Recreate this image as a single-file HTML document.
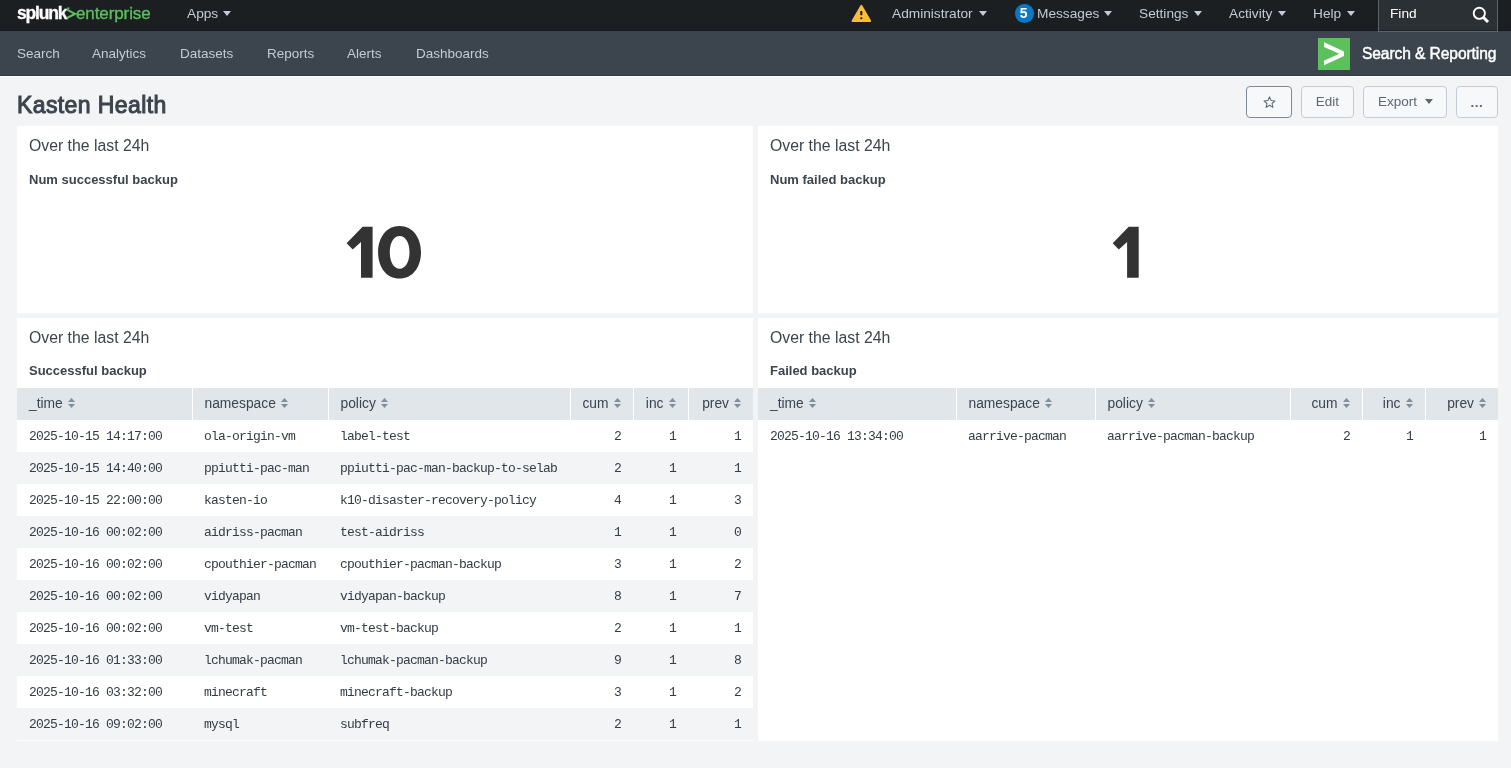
<!DOCTYPE html>
<html><head><meta charset="utf-8"><style>
*{box-sizing:border-box;margin:0;padding:0}
html,body{width:1511px;height:768px;overflow:hidden;background:#f2f4f5;font-family:"Liberation Sans",sans-serif;color:#3c444d}
.abs{position:absolute}
#wrap{position:absolute;left:0;top:0;width:1511px;height:768px;will-change:transform}
#top{position:absolute;z-index:2;left:0;top:0;width:1511px;height:31px;background:#1b1f22;border-bottom:1px solid #171b1e}
#appbar{position:absolute;left:0;top:31px;width:1511px;height:45px;background:#3c444d;border-bottom:1px solid #343b43}
#appbar:after{content:"";position:absolute;left:0;right:0;bottom:-2px;height:1px;background:#fff}
.nav{position:absolute;top:0;height:31px;line-height:27px;font-size:13.7px;color:#c3cbd4;white-space:nowrap}
.caret{position:absolute;width:0;height:0;border-left:4px solid transparent;border-right:4px solid transparent;border-top:5px solid #c3cbd4}
.app{position:absolute;top:15px;font-size:13.5px;line-height:16px;color:#c3cbd4;white-space:nowrap}
#title{position:absolute;left:17px;top:91px;font-size:23px;line-height:28px;letter-spacing:0.4px;-webkit-text-stroke:1px #3c444d;color:#3c444d;white-space:nowrap}
.btn{position:absolute;top:86px;height:32px;border:1px solid #c3cbd4;border-radius:4px;background:#f7f8fa;font-size:13.5px;line-height:30px;color:#5c6773;white-space:nowrap}
.panel{position:absolute;background:#fff}
.ptitle{position:absolute;left:12px;font-size:15.8px;line-height:20px;color:#3c444d;white-space:nowrap}
.psub{position:absolute;left:12px;font-size:13px;line-height:16px;font-weight:bold;color:#3c444d;white-space:nowrap}
table{position:absolute;left:0;border-collapse:collapse;table-layout:fixed}
th{height:32px;background:#e1e6eb;font-weight:normal;font-size:13.8px;line-height:30px;padding:1px 0 1px 12px;text-align:left;border-left:1px solid #fff;color:#3c444d;white-space:nowrap;vertical-align:top}
th:first-child{border-left:0}
th.r{text-align:right;padding:1px 12px 1px 0}
td{height:32px;font-family:"Liberation Mono",monospace;font-size:13px;letter-spacing:-0.8px;line-height:30px;padding:2px 0 0 12px;color:#353c44;white-space:nowrap;overflow:hidden;vertical-align:top}
td.r{text-align:right;padding:2px 12px 0 0}
tr:nth-child(odd) td{background:#f2f4f5}
.sort{display:inline-block;vertical-align:baseline;margin-left:5px;position:relative;top:0px}
</style></head><body><div id="wrap">
<div id="top"><div class="nav" style="left:17px;top:0;font-size:17.5px;line-height:27px;font-weight:bold;color:#fff;letter-spacing:-1.2px;-webkit-text-stroke:0.3px #fff">splunk</div><svg class="abs" style="left:66px;top:7px" width="11" height="14" viewBox="0 0 11 14"><path d="M1 2.6L9 6.8L1 11" fill="none" stroke="#5cc05c" stroke-width="2"/><circle cx="2.4" cy="1.3" r="1.1" fill="#5cc05c"/></svg><div class="nav" style="left:76px;top:0;font-size:17px;line-height:27px;color:#5cc05c;letter-spacing:-0.1px;-webkit-text-stroke:0.35px #5cc05c">enterprise</div><div class="nav" style="left:187px">Apps</div><div class="caret" style="left:223px;top:11px"></div><svg class="abs" style="left:851px;top:4px" width="21" height="19" viewBox="0 0 21 19"><path d="M10.35 1.2Q10.35 0.8 10.35 0.8Q10.9 0.8 11.3 1.5L20 16.6Q20.6 18 19.2 18H1.5Q0.1 18 0.7 16.6L9.4 1.5Q9.8 0.8 10.35 0.8Z" fill="#f8be34"/><rect x="9.25" y="7" width="2.1" height="4.2" rx="0.6" fill="#1a1e22"/><rect x="9.2" y="13.2" width="2.2" height="2" rx="0.9" fill="#1a1e22"/></svg><div class="nav" style="left:892px">Administrator</div><div class="caret" style="left:979px;top:11px"></div><div class="abs" style="left:1015px;top:4px;width:18.5px;height:19px;border-radius:50%;background:#0a78c4;color:#fff;font-size:14px;line-height:18px;font-weight:bold;text-align:center;text-indent:-1px">5</div><div class="nav" style="left:1037px">Messages</div><div class="caret" style="left:1104px;top:11px"></div><div class="nav" style="left:1139px">Settings</div><div class="caret" style="left:1194px;top:11px"></div><div class="nav" style="left:1229px">Activity</div><div class="caret" style="left:1278px;top:11px"></div><div class="nav" style="left:1313px">Help</div><div class="caret" style="left:1347px;top:11px"></div><div class="abs" style="left:1378px;top:0;width:120px;height:32px;background:#2b3034;border:1px solid #5a646f;border-top:0;box-shadow:inset 0 -1px 0 #202427"></div><div class="nav" style="left:1390px;color:#fff">Find</div><svg class="abs" style="left:1472px;top:6px" width="18" height="18" viewBox="0 0 18 18"><circle cx="7.3" cy="7.3" r="5.6" fill="none" stroke="#fff" stroke-width="1.9"/><path d="M11 11L16 16" stroke="#fff" stroke-width="3"/></svg></div><div id="appbar"><div class="app" style="left:17px">Search</div><div class="app" style="left:92px">Analytics</div><div class="app" style="left:180px">Datasets</div><div class="app" style="left:267px">Reports</div><div class="app" style="left:347px">Alerts</div><div class="app" style="left:416px">Dashboards</div><svg class="abs" style="left:1318px;top:7px" width="32" height="32" viewBox="0 0 32 32"><rect width="32" height="32" fill="#5cc05c"/><path d="M6 4.3L26 13.5V18.1L6 27.3V22.7L21.2 15.8L6 8.9Z" fill="#fff"/></svg><div class="app" style="left:1362px;top:14px;font-size:15.6px;line-height:18px;letter-spacing:-0.1px;-webkit-text-stroke:0.45px #fff;color:#fff">Search &amp; Reporting</div></div><div id="title">Kasten Health</div><div class="btn" style="left:1246px;width:46px;border-color:#7d8995"><svg class="abs" style="left:16px;top:9px" width="13" height="13" viewBox="0 0 13 13"><path d="M6.5 0.9L8.1 4.6L12 4.9L9 7.5L9.9 11.4L6.5 9.3L3.1 11.4L4 7.5L1 4.9L4.9 4.6Z" fill="none" stroke="#5c6773" stroke-width="1.05" stroke-linejoin="round"/></svg></div><div class="btn" style="left:1301px;width:53px;text-align:center">Edit</div><div class="btn" style="left:1363px;width:84px;padding-left:14px">Export<div class="caret" style="left:61px;top:12px;border-top-color:#5c6773"></div></div><div class="btn" style="left:1456px;width:42px;text-align:center;font-weight:bold;letter-spacing:0.5px;line-height:32px">...</div><div class="panel" style="left:17px;top:126px;width:736px;height:187px"><div class="ptitle" style="top:10px">Over the last 24h</div><div class="psub" style="top:46px">Num successful backup</div></div><div class="panel" style="left:758px;top:126px;width:740px;height:187px"><div class="ptitle" style="top:10px">Over the last 24h</div><div class="psub" style="top:46px">Num failed backup</div></div><svg class="abs" style="left:0;top:0" width="1511" height="768" viewBox="0 0 1511 768" fill="#333"><path d="M362.6 226.8H372.6V277.7H361.0V242.1L352.7 249.6L346.6 243.3Z"/><path d="M1128.7 226.8H1138.7V277.7H1127.1V242.1L1118.8 249.6L1112.7 243.3Z"/><path fill-rule="evenodd" d="M399.5 226C413 226 421 238 421 252.3C421 266.6 413 278.6 399.5 278.6C386 278.6 378.1 266.6 378.1 252.3C378.1 238 386 226 399.5 226Z M399.6 236C393.5 236 389.8 243 389.8 252.3C389.8 261.6 393.5 268.7 399.6 268.7C405.7 268.7 409.5 261.6 409.5 252.3C409.5 243 405.7 236 399.6 236Z"/></svg><div class="panel" style="left:17px;top:318px;width:736px;height:423px"><div class="ptitle" style="top:10px">Over the last 24h</div><div class="psub" style="top:45px">Successful backup</div><table style="top:70px;width:736px"><colgroup><col style="width:175px"><col style="width:136px"><col style="width:242px"><col style="width:63px"><col style="width:55px"><col style="width:65px"></colgroup><tr><th>_time<svg class="sort" width="7" height="10" viewBox="0 0 7 10"><path d="M3.5 0L7 4H0Z M3.5 10L7 6H0Z" fill="#818d99"/></svg></th><th>namespace<svg class="sort" width="7" height="10" viewBox="0 0 7 10"><path d="M3.5 0L7 4H0Z M3.5 10L7 6H0Z" fill="#818d99"/></svg></th><th>policy<svg class="sort" width="7" height="10" viewBox="0 0 7 10"><path d="M3.5 0L7 4H0Z M3.5 10L7 6H0Z" fill="#818d99"/></svg></th><th class="r">cum<svg class="sort" width="7" height="10" viewBox="0 0 7 10"><path d="M3.5 0L7 4H0Z M3.5 10L7 6H0Z" fill="#818d99"/></svg></th><th class="r">inc<svg class="sort" width="7" height="10" viewBox="0 0 7 10"><path d="M3.5 0L7 4H0Z M3.5 10L7 6H0Z" fill="#818d99"/></svg></th><th class="r">prev<svg class="sort" width="7" height="10" viewBox="0 0 7 10"><path d="M3.5 0L7 4H0Z M3.5 10L7 6H0Z" fill="#818d99"/></svg></th></tr><tr><td>2025-10-15 14:17:00</td><td>ola-origin-vm</td><td>label-test</td><td class="r">2</td><td class="r">1</td><td class="r">1</td></tr><tr><td>2025-10-15 14:40:00</td><td>ppiutti-pac-man</td><td>ppiutti-pac-man-backup-to-selab</td><td class="r">2</td><td class="r">1</td><td class="r">1</td></tr><tr><td>2025-10-15 22:00:00</td><td>kasten-io</td><td>k10-disaster-recovery-policy</td><td class="r">4</td><td class="r">1</td><td class="r">3</td></tr><tr><td>2025-10-16 00:02:00</td><td>aidriss-pacman</td><td>test-aidriss</td><td class="r">1</td><td class="r">1</td><td class="r">0</td></tr><tr><td>2025-10-16 00:02:00</td><td>cpouthier-pacman</td><td>cpouthier-pacman-backup</td><td class="r">3</td><td class="r">1</td><td class="r">2</td></tr><tr><td>2025-10-16 00:02:00</td><td>vidyapan</td><td>vidyapan-backup</td><td class="r">8</td><td class="r">1</td><td class="r">7</td></tr><tr><td>2025-10-16 00:02:00</td><td>vm-test</td><td>vm-test-backup</td><td class="r">2</td><td class="r">1</td><td class="r">1</td></tr><tr><td>2025-10-16 01:33:00</td><td>lchumak-pacman</td><td>lchumak-pacman-backup</td><td class="r">9</td><td class="r">1</td><td class="r">8</td></tr><tr><td>2025-10-16 03:32:00</td><td>minecraft</td><td>minecraft-backup</td><td class="r">3</td><td class="r">1</td><td class="r">2</td></tr><tr><td>2025-10-16 09:02:00</td><td>mysql</td><td>subfreq</td><td class="r">2</td><td class="r">1</td><td class="r">1</td></tr></table></div><div class="panel" style="left:758px;top:318px;width:740px;height:423px"><div class="ptitle" style="top:10px">Over the last 24h</div><div class="psub" style="top:45px">Failed backup</div><table style="top:70px;width:740px"><colgroup><col style="width:198px"><col style="width:139px"><col style="width:195px"><col style="width:72px"><col style="width:63px"><col style="width:73px"></colgroup><tr><th>_time<svg class="sort" width="7" height="10" viewBox="0 0 7 10"><path d="M3.5 0L7 4H0Z M3.5 10L7 6H0Z" fill="#818d99"/></svg></th><th>namespace<svg class="sort" width="7" height="10" viewBox="0 0 7 10"><path d="M3.5 0L7 4H0Z M3.5 10L7 6H0Z" fill="#818d99"/></svg></th><th>policy<svg class="sort" width="7" height="10" viewBox="0 0 7 10"><path d="M3.5 0L7 4H0Z M3.5 10L7 6H0Z" fill="#818d99"/></svg></th><th class="r">cum<svg class="sort" width="7" height="10" viewBox="0 0 7 10"><path d="M3.5 0L7 4H0Z M3.5 10L7 6H0Z" fill="#818d99"/></svg></th><th class="r">inc<svg class="sort" width="7" height="10" viewBox="0 0 7 10"><path d="M3.5 0L7 4H0Z M3.5 10L7 6H0Z" fill="#818d99"/></svg></th><th class="r">prev<svg class="sort" width="7" height="10" viewBox="0 0 7 10"><path d="M3.5 0L7 4H0Z M3.5 10L7 6H0Z" fill="#818d99"/></svg></th></tr><tr><td>2025-10-16 13:34:00</td><td>aarrive-pacman</td><td>aarrive-pacman-backup</td><td class="r">2</td><td class="r">1</td><td class="r">1</td></tr></table></div>
</div></body></html>
